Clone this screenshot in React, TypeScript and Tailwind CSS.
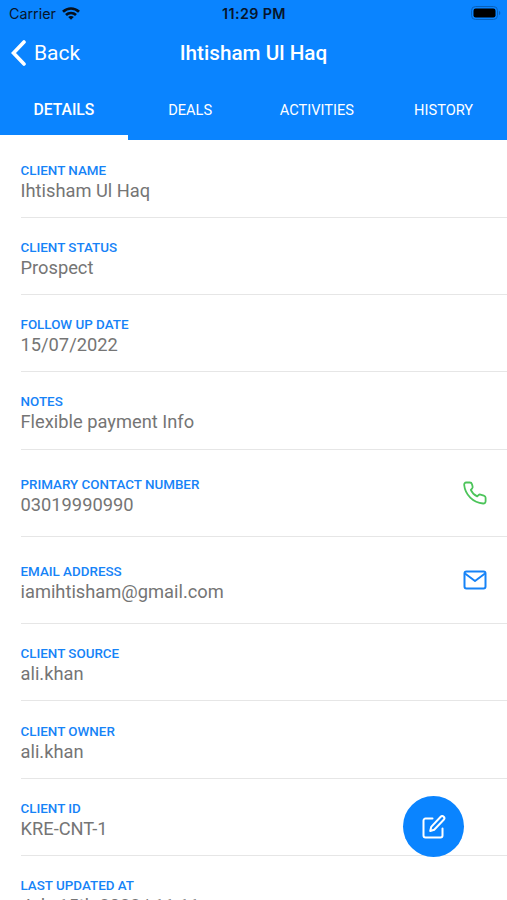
const tabs = ["DETAILS", "DEALS", "ACTIVITIES", "HISTORY"];

const fields = [
	{ label: "CLIENT NAME", value: "Ihtisham Ul Haq" },
	{ label: "CLIENT STATUS", value: "Prospect" },
	{ label: "FOLLOW UP DATE", value: "15/07/2022" },
	{ label: "NOTES", value: "Flexible payment Info" },
	{ label: "PRIMARY CONTACT NUMBER", value: "03019990990", icon: "phone" },
	{ label: "EMAIL ADDRESS", value: "iamihtisham@gmail.com", icon: "mail" },
	{ label: "CLIENT SOURCE", value: "ali.khan" },
	{ label: "CLIENT OWNER", value: "ali.khan" },
	{ label: "CLIENT ID", value: "KRE-CNT-1" },
	{ label: "LAST UPDATED AT", value: "July 15th 2022 | 11:11" },
];

export default function ClientDetails() {
	return (
		<div className="relative h-[900px] w-[507px] overflow-hidden bg-white font-['Roboto',sans-serif]">
			{/* Header */}
			<header className="h-[140px] bg-[#0a84ff]">
				<div className="grid h-7 grid-cols-3 items-center pr-[6px] pl-[9px] font-['Inter',sans-serif] text-[14px] text-[#07152b]">
					<div className="flex items-center gap-[6px]">
						<span className="text-[14.3px]">Carrier</span>
						<svg viewBox="0 0 18 13" className="mb-[2px] h-[13px] w-[18px]" fill="none" stroke="#07101c" strokeWidth="2.7">
							<path d="M1 4.8C5.6.4 12.4.4 17 4.8M4 8c2.8-2.7 7.2-2.7 10 0" />
							<path d="M9 12.8 6.2 10c1.6-1.5 4-1.5 5.6 0z" fill="#07101c" stroke="none" />
						</svg>
					</div>
					<span className="pr-[2px] text-center text-[14.3px] font-semibold tracking-[0.4px] whitespace-nowrap">11:29 PM</span>
					<svg viewBox="0 0 30 14" className="mb-[2px] h-[14px] w-[30px] justify-self-end">
						<rect x=".5" y=".5" width="26" height="13" rx="4" fill="#0a84ff" stroke="#0861bb" />
						<rect x="2.5" y="2.5" width="22" height="9" rx="2.2" fill="#000" />
						<path d="M28 5c1.7.5 1.7 3.5 0 4z" fill="#0861bb" />
					</svg>
				</div>

				<div className="grid h-[50px] grid-cols-3 items-center text-white">
					<button className="flex items-center gap-[8px] pl-[11px] text-[21px]">
						<svg viewBox="0 0 15 26" className="h-[26px] w-[15px]" fill="none" stroke="currentColor" strokeWidth="3.6">
							<path d="M13 2 2.5 13 13 24" strokeLinecap="round" />
						</svg>
						<span className="pt-[2px]">Back</span>
					</button>
					<h1 className="pt-px text-center text-[20.7px] font-medium whitespace-nowrap">Ihtisham Ul Haq</h1>
				</div>

				<nav className="grid h-[62px] grid-cols-4 text-white">
					{tabs.map((tab, i) => (
						<button
							key={tab}
							className={
								i === 0
									? "mr-[-1px] border-b-5 border-white pt-[7px] text-[15.7px] font-medium"
									: "pt-[3px] text-[14.6px]"
							}
						>
							{tab}
						</button>
					))}
				</nav>
			</header>

			{/* Client fields */}
			<main className="pt-[0.4px] pl-[20.5px]">
				{fields.map(({ label, value, icon }) => (
					<div
						key={label}
						className={
							icon
								? "flex h-[87.3px] items-center justify-between border-b border-[#e6e6e6] pr-[20px]"
								: "flex h-[77.3px] items-center border-b border-[#e6e6e6]"
						}
					>
						<div className="pt-[6px]">
							<p className="text-[13.4px] leading-[18px] font-medium text-[#1683f7]">{label}</p>
							<p className="text-[18.3px] leading-[22px] whitespace-nowrap text-[#757575]">{value}</p>
						</div>
						{icon === "phone" && (
							<svg viewBox="0 0 24 24" className="h-6 w-6 text-[#4cc45a]" fill="none" stroke="currentColor" strokeWidth="1.8" strokeLinejoin="round">
								<path d="M3.200 1.500H6.800c1.200 0 1.900.6 2.200 1.700l.6 2.300c.2.900 0 1.500-.6 2.100L7.800 8.800c1.300 2.900 3.500 5.200 6.400 6.600l1.300-1.300c.6-.6 1.300-.7 2-.5l3.300 1c1.200.4 1.800 1.100 1.800 2.200v3.500c0 1.500-1 2.300-2.500 2.200C10.200 21.800 2.100 13.600 1.200 4 1.100 2.500 1.800 1.500 3.200 1.500z" />
							</svg>
						)}
						{icon === "mail" && (
							<svg viewBox="0 0 24 24" className="h-6 w-6 text-[#1683f7]" fill="none" stroke="currentColor" strokeWidth="2" strokeLinejoin="round">
								<rect x="1.5" y="3.5" width="21" height="17" rx="2" />
								<path d="m2 5.5 10 7.5 10-7.5" />
							</svg>
						)}
					</div>
				))}
			</main>

			<button className="absolute top-[796px] left-[403px] flex h-[61px] w-[61px] items-center justify-center rounded-full bg-[#0a84ff] text-white">
				<svg viewBox="0 0 24 24" className="h-6 w-6" fill="none" stroke="currentColor" strokeWidth="2" strokeLinecap="round" strokeLinejoin="round">
					<path d="M10.500 3.500H3.500a2 2 0 0 0-2 2v15a2 2 0 0 0 2 2h15a2 2 0 0 0 2-2v-7" />
					<path d="M18.700 1.800a2.100 2.100 0 0 1 3 3L12.200 14.700l-4 1.300 1-4.100z" />
				</svg>
			</button>
		</div>
	);
}
